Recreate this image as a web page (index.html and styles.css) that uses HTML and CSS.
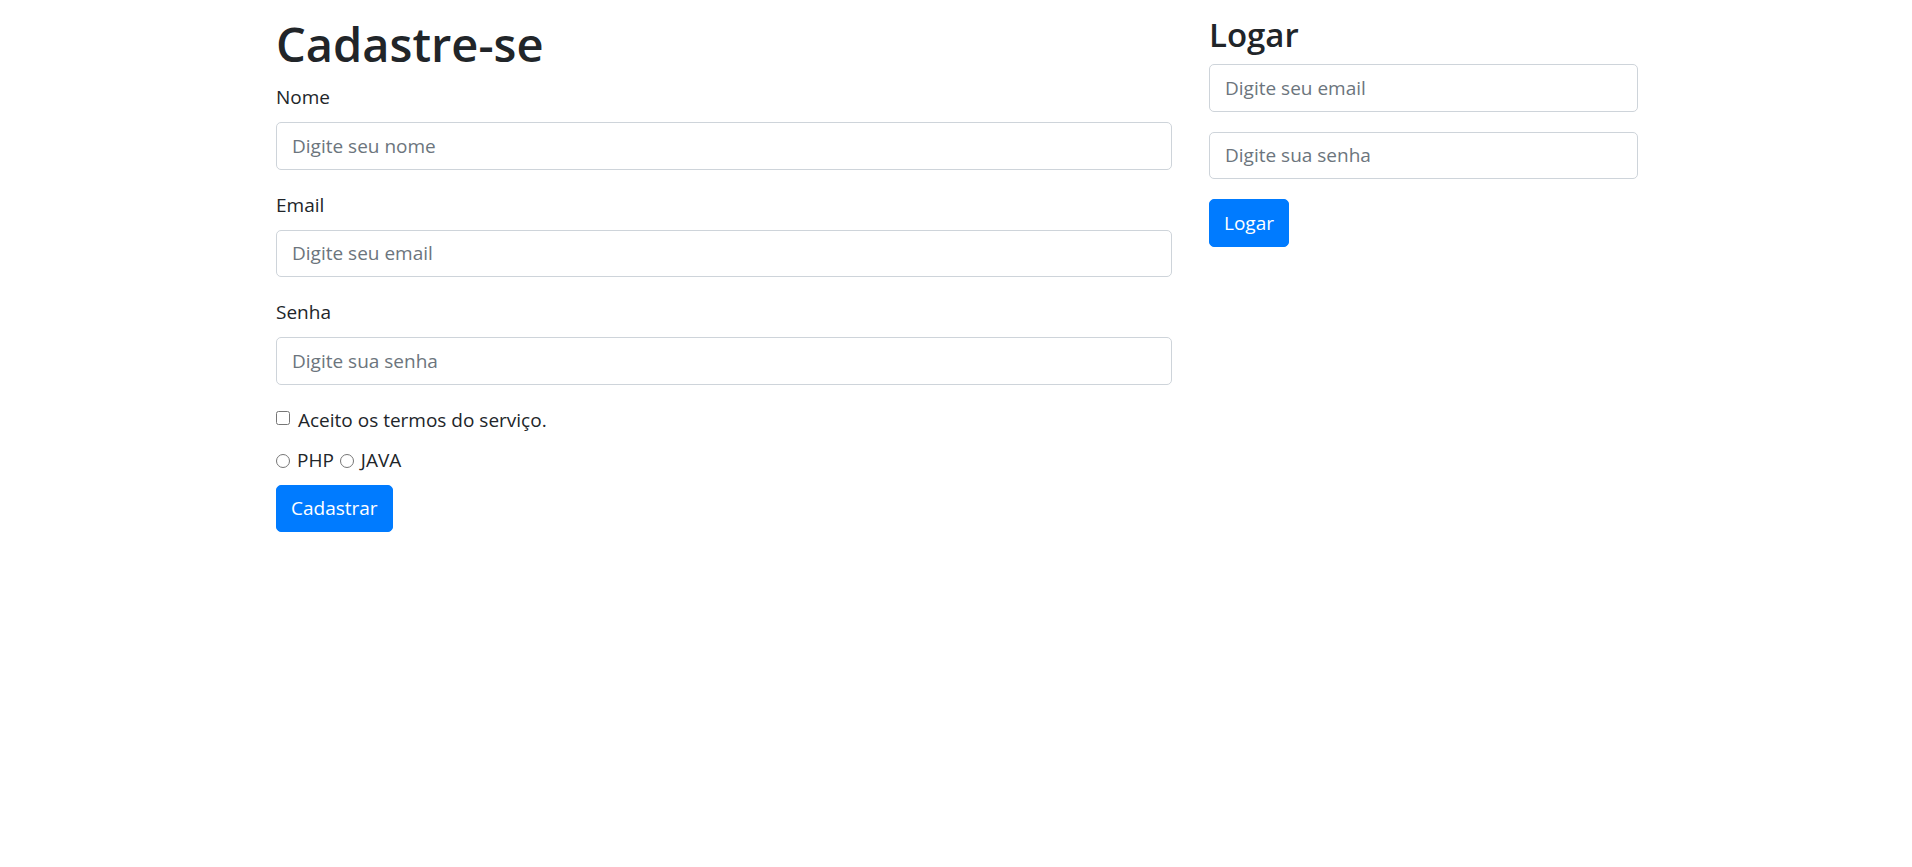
FILE: index.html
```html
<!DOCTYPE html>
<html lang="pt-BR">
<head>
<meta charset="utf-8">
<title>Cadastro</title>
<link rel="stylesheet" href="styles.css">
</head>
<body>
<div class="page">
  <div class="row">
    <div class="col-main">
      <h1 class="title">Cadastre-se</h1>
      <form class="form">
        <div class="group">
          <label class="label" for="nome">Nome</label>
          <input class="field" id="nome" type="text" placeholder="Digite seu nome">
        </div>
        <div class="group">
          <label class="label" for="email">Email</label>
          <input class="field" id="email" type="email" placeholder="Digite seu email">
        </div>
        <div class="group">
          <label class="label" for="senha">Senha</label>
          <input class="field" id="senha" type="password" placeholder="Digite sua senha">
        </div>
        <div class="line"><input class="check" type="checkbox" id="termos"><label for="termos">Aceito os termos do serviço.</label></div>
        <div class="line"><input class="radio" type="radio" name="ling" id="php"><label for="php">PHP</label> <input class="radio" type="radio" name="ling" id="java"><label for="java">JAVA</label></div>
        <button class="btn" type="button">Cadastrar</button>
      </form>
    </div>
    <div class="col-side">
      <h3 class="subtitle">Logar</h3>
      <form class="form">
        <div class="group">
          <input class="field" type="email" placeholder="Digite seu email">
        </div>
        <div class="group">
          <input class="field" type="password" placeholder="Digite sua senha">
        </div>
        <button class="btn" type="button">Logar</button>
      </form>
    </div>
  </div>
</div>
</body>
</html>
```

FILE: styles.css
```css
html, body {
  margin: 0;
  padding: 0;
  background: #fff;
}
body {
  font-family: "Open Sans", "Noto Sans", sans-serif;
  font-size: 19px;
  line-height: 30px;
  color: #212529;
}
.page {
  display: flex;
  justify-content: center;
  padding: 12px 0 0 2px;
}
.row {
  display: grid;
  grid-template-columns: 896px 429px;
  column-gap: 37px;
  width: 1362px;
}
.title {
  margin: 0 0 8px;
  padding-top: 2px;
  font-size: 47px;
  line-height: 60px;
  font-weight: 600;
}
.subtitle {
  margin: 0 0 8px;
  padding-top: 2px;
  font-size: 33px;
  line-height: 42px;
  font-weight: 600;
}
.form {
  margin: 0;
}
.group {
  margin-bottom: 20px;
}
.label {
  display: block;
  margin-bottom: 10px;
  padding-top: 1px;
  line-height: 29px;
}
.field {
  display: block;
  box-sizing: border-box;
  width: 100%;
  height: 47.5px;
  margin: 0;
  padding: 7.5px 15px;
  border: 1.25px solid #ced4da;
  border-radius: 5px;
  font-family: inherit;
  font-size: 19px;
  line-height: 30px;
  color: #495057;
  background: #fff;
}
.field::placeholder {
  color: #6c757d;
  opacity: 1;
}
.line {
  margin-bottom: 10px;
  padding-top: 1px;
  line-height: 29px;
}
.check, .radio {
  -webkit-appearance: none;
  appearance: none;
  display: inline-block;
  box-sizing: border-box;
  width: 14px;
  height: 14px;
  margin: 0 8px 0 0;
  border: 1.25px solid #767676;
  background: #fff;
  vertical-align: baseline;
}
.check {
  border-radius: 2.5px;
  margin-bottom: 2px;
}
.radio {
  border-radius: 50%;
  margin-bottom: -1px;
  margin-right: 7px;
}
.radio + label + .radio {
  margin-left: 1px;
}
.btn {
  display: inline-block;
  box-sizing: border-box;
  height: 47.5px;
  padding: 7.5px 14px;
  border: 1.25px solid #007bff;
  border-radius: 5px;
  background: #007bff;
  color: #fff;
  font-family: inherit;
  font-size: 19px;
  line-height: 30px;
  cursor: pointer;
}
```
